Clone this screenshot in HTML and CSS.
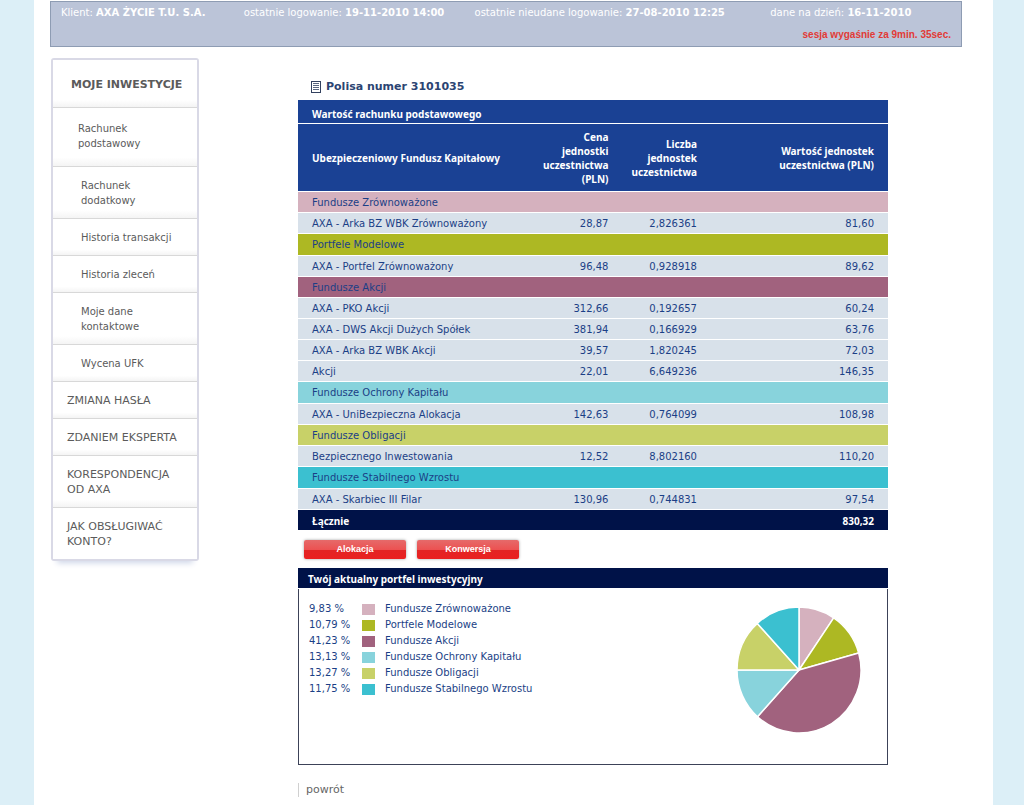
FILE: index.html
```html
<!DOCTYPE html>
<html lang="pl">
<head>
<meta charset="utf-8">
<title>Moje inwestycje</title>
<link rel="stylesheet" href="styles.css">
</head>
<body>
<div class="page">
  <header class="status">
    <div class="status-items">
      <span>Klient: <b>AXA ŻYCIE T.U. S.A.</b></span>
      <span>ostatnie logowanie: <b>19-11-2010 14:00</b></span>
      <span>ostatnie nieudane logowanie: <b>27-08-2010 12:25</b></span>
      <span>dane na dzień: <b>16-11-2010</b></span>
    </div>
    <p class="session">sesja wygaśnie za 9min. 35sec.</p>
  </header>
  <div class="columns">
    <nav class="menu">
      <a class="menu-title" href="#">MOJE INWESTYCJE</a>
      <a class="sub first" href="#">Rachunek<br>podstawowy</a>
      <a class="sub" href="#">Rachunek<br>dodatkowy</a>
      <a class="sub" href="#">Historia transakcji</a>
      <a class="sub" href="#">Historia zleceń</a>
      <a class="sub" href="#">Moje dane<br>kontaktowe</a>
      <a class="sub" href="#">Wycena UFK</a>
      <a href="#">ZMIANA HASŁA</a>
      <a href="#">ZDANIEM EKSPERTA</a>
      <a href="#">KORESPONDENCJA<br>OD AXA</a>
      <a href="#">JAK OBSŁUGIWAĆ<br>KONTO?</a>
    </nav>
    <main class="content">
      <h1 class="policy">
        <svg width="10" height="12" viewBox="0 0 10 12" aria-hidden="true"><rect x=".5" y=".5" width="9" height="11" fill="#fff" stroke="#33415f"/><path d="M2 2.5h6M2 4.5h6M2 6.5h6M2 8.5h6" stroke="#5a6680"/></svg>
        Polisa numer 3101035
      </h1>
      <table class="funds">
        <colgroup><col class="c-name"><col class="c-price"><col class="c-units"><col class="c-value"></colgroup>
        <thead>
          <tr class="caption"><th colspan="4">Wartość rachunku podstawowego</th></tr>
          <tr class="heads"><th>Ubezpieczeniowy Fundusz Kapitałowy</th><th>Cena<br>jednostki<br>uczestnictwa<br>(PLN)</th><th>Liczba<br>jednostek<br>uczestnictwa</th><th>Wartość jednostek<br>uczestnictwa (PLN)</th></tr>
        </thead>
        <tbody>
          <tr class="rose"><td colspan="4">Fundusze Zrównoważone</td></tr>
          <tr><td>AXA - Arka BZ WBK Zrównoważony</td><td>28,87</td><td>2,826361</td><td>81,60</td></tr>
          <tr class="olive tall"><td colspan="4">Portfele Modelowe</td></tr>
          <tr><td>AXA - Portfel Zrównoważony</td><td>96,48</td><td>0,928918</td><td>89,62</td></tr>
          <tr class="plum"><td colspan="4">Fundusze Akcji</td></tr>
          <tr><td>AXA - PKO Akcji</td><td>312,66</td><td>0,192657</td><td>60,24</td></tr>
          <tr><td>AXA - DWS Akcji Dużych Spółek</td><td>381,94</td><td>0,166929</td><td>63,76</td></tr>
          <tr><td>AXA - Arka BZ WBK Akcji</td><td>39,57</td><td>1,820245</td><td>72,03</td></tr>
          <tr><td>Akcji</td><td>22,01</td><td>6,649236</td><td>146,35</td></tr>
          <tr class="aqua tall"><td colspan="4">Fundusze Ochrony Kapitału</td></tr>
          <tr><td>AXA - UniBezpieczna Alokacja</td><td>142,63</td><td>0,764099</td><td>108,98</td></tr>
          <tr class="lime"><td colspan="4">Fundusze Obligacji</td></tr>
          <tr><td>Bezpiecznego Inwestowania</td><td>12,52</td><td>8,802160</td><td>110,20</td></tr>
          <tr class="teal tall"><td colspan="4">Fundusze Stabilnego Wzrostu</td></tr>
          <tr><td>AXA - Skarbiec III Filar</td><td>130,96</td><td>0,744831</td><td>97,54</td></tr>
        </tbody>
        <tfoot><tr><th colspan="3">Łącznie</th><td>830,32</td></tr></tfoot>
      </table>
      <div class="actions">
        <button type="button">Alokacja</button>
        <button type="button">Konwersja</button>
      </div>
      <section class="portfolio">
        <h2>Twój aktualny portfel inwestycyjny</h2>
        <div class="portfolio-body">
          <ul class="legend">
            <li><span>9,83 %</span><i class="rose"></i>Fundusze Zrównoważone</li>
            <li><span>10,79 %</span><i class="olive"></i>Portfele Modelowe</li>
            <li><span>41,23 %</span><i class="plum"></i>Fundusze Akcji</li>
            <li><span>13,13 %</span><i class="aqua"></i>Fundusze Ochrony Kapitału</li>
            <li><span>13,27 %</span><i class="lime"></i>Fundusze Obligacji</li>
            <li><span>11,75 %</span><i class="teal"></i>Fundusze Stabilnego Wzrostu</li>
          </ul>
          <svg class="pie" width="126" height="128" viewBox="0 0 126 128" role="img" aria-label="Portfel inwestycyjny">
            <g stroke="#fff" stroke-width="1.5" stroke-linejoin="round">
              <path fill="#d5b1be" d="M63 64V1A62 63 0 0 1 97.7 11.8Z"/>
              <path fill="#adb823" d="M63 64L97.7 11.8A62 63 0 0 1 122.7 47Z"/>
              <path fill="#a1627e" d="M63 64L122.7 47A62 63 0 0 1 21.5 110.8Z"/>
              <path fill="#88d3dc" d="M63 64L21.5 110.8A62 63 0 0 1 1 64Z"/>
              <path fill="#c8d168" d="M63 64H1A62 63 0 0 1 21.3 17.4Z"/>
              <path fill="#3bc0d0" d="M63 64L21.3 17.4A62 63 0 0 1 63 1Z"/>
            </g>
          </svg>
        </div>
      </section>
      <a class="back" href="#">powrót</a>
    </main>
  </div>
</div>
</body>
</html>
```
FILE: styles.css
```css
* { box-sizing: border-box; }
body {
  margin: 0;
  background: #dceff7;
  color: #1b3f86;
  font: 10px/14px Verdana, "DejaVu Sans", sans-serif;
}
a { color: inherit; text-decoration: none; }
.page {
  min-height: 100vh;
  margin: 0 31px 0 34px;
  padding: 1px 31px 0 16px;
  background: #fff;
}
.status {
  height: 46px;
  padding: 4px 10px 0 10px;
  border: 1px solid #8e9cb3;
  background: #bbc4d8;
  color: #fff;
}
.status-items {
  display: grid;
  grid-template-columns: 183fr 231fr 296fr 181fr;
  white-space: nowrap;
}
.session {
  margin: 8px 0 0;
  color: #e23a36;
  font: bold 10px/14px "Liberation Sans", sans-serif;
  text-align: right;
}
.columns {
  display: flex;
  justify-content: space-between;
  align-items: flex-start;
  padding: 11px 74px 0 1px;
}
.menu {
  display: flex;
  flex-direction: column;
  flex: 0 0 148px;
  border: 2px solid #d9d9e6;
  border-radius: 3px;
  box-shadow: 0 8px 6px -6px #cdd5e8;
  color: #5b5b5b;
}
.menu a {
  padding: 11px 8px 10px 14px;
  border-bottom: 1px solid #d8d8d8;
  background: linear-gradient(#fff 85%, #f4f4f4);
  font-size: 11px;
  line-height: 15px;
}
.menu a:last-child { border-bottom: 0; background: #fff; }
.menu .menu-title { padding: 17px 8px 15px 18px; font-weight: bold; }
.menu .sub { padding-left: 28px; font-size: 10px; }
.menu .first { padding: 13px 8px 15px 25px; }
.content { flex: 0 1 590px; padding-top: 21px; }
.policy {
  display: flex;
  align-items: center;
  gap: 5px;
  margin: 0 0 5px;
  padding-left: 13px;
  color: #2b4472;
  font-size: 11px;
  line-height: 16px;
}
.funds {
  width: 100%;
  border-collapse: separate;
  border-spacing: 0;
  table-layout: fixed;
}
.c-name { width: 38%; }
.c-price { width: 17%; }
.c-units { width: 15%; }
.c-value { width: 30%; }
.funds td, .funds th {
  height: 21px;
  padding: 1px 14px 0 4px;
  border-bottom: 1px solid #fff;
  background: #d8e1ea;
  text-align: right;
  line-height: 14px;
}
.funds td:first-child, .funds th:first-child { padding-left: 14px; text-align: left; }
.funds .tall td { height: 22px; }
.funds thead th, .funds tfoot th, .funds tfoot td {
  background: #1a4194;
  color: #fff;
  font: bold 10px/14px "Noto Sans", sans-serif;
}
.funds .caption th { height: 24px; padding-top: 4px; }
.funds .heads th { height: 68px; }
.funds tfoot th, .funds tfoot td { background: #001248; }
.funds .rose td, .legend .rose { background: #d5b1be; }
.funds .olive td, .legend .olive { background: #adb823; }
.funds .plum td, .legend .plum { background: #a1627e; }
.funds .aqua td, .legend .aqua { background: #88d3dc; }
.funds .lime td, .legend .lime { background: #c8d168; }
.funds .teal td, .legend .teal { background: #3bc0d0; }
.actions { display: flex; gap: 11px; padding: 9px 6px; }
.actions button {
  width: 102px;
  height: 19px;
  padding: 0;
  border: 0;
  border-radius: 2px;
  background: linear-gradient(#e66a6a, #ec5252 50%, #e32424 55%, #ea2020);
  box-shadow: 0 0 3px #a0a0a0;
  color: #fff;
  font: bold 9px/19px "Liberation Sans", sans-serif;
}
.portfolio h2 {
  margin: 0 0 1px;
  padding: 4px 10px 2px;
  background: #001248;
  color: #fff;
  font: bold 10px/14px "Noto Sans", sans-serif;
}
.portfolio-body {
  display: flex;
  justify-content: space-between;
  min-height: 176px;
  padding: 12px 25px 0 10px;
  border: 1px solid #3c4258;
  border-top: 0;
}
.legend { margin: 0; padding: 0; list-style: none; }
.legend li { display: flex; align-items: center; height: 16px; }
.legend span { width: 53px; }
.legend i { width: 13px; height: 11px; margin-right: 10px; }
.pie { margin-top: 5px; }
.back {
  display: inline-block;
  margin-top: 18px;
  padding-left: 7px;
  border-left: 1px solid #d0d0d0;
  color: #666;
  font-size: 11px;
}
```
